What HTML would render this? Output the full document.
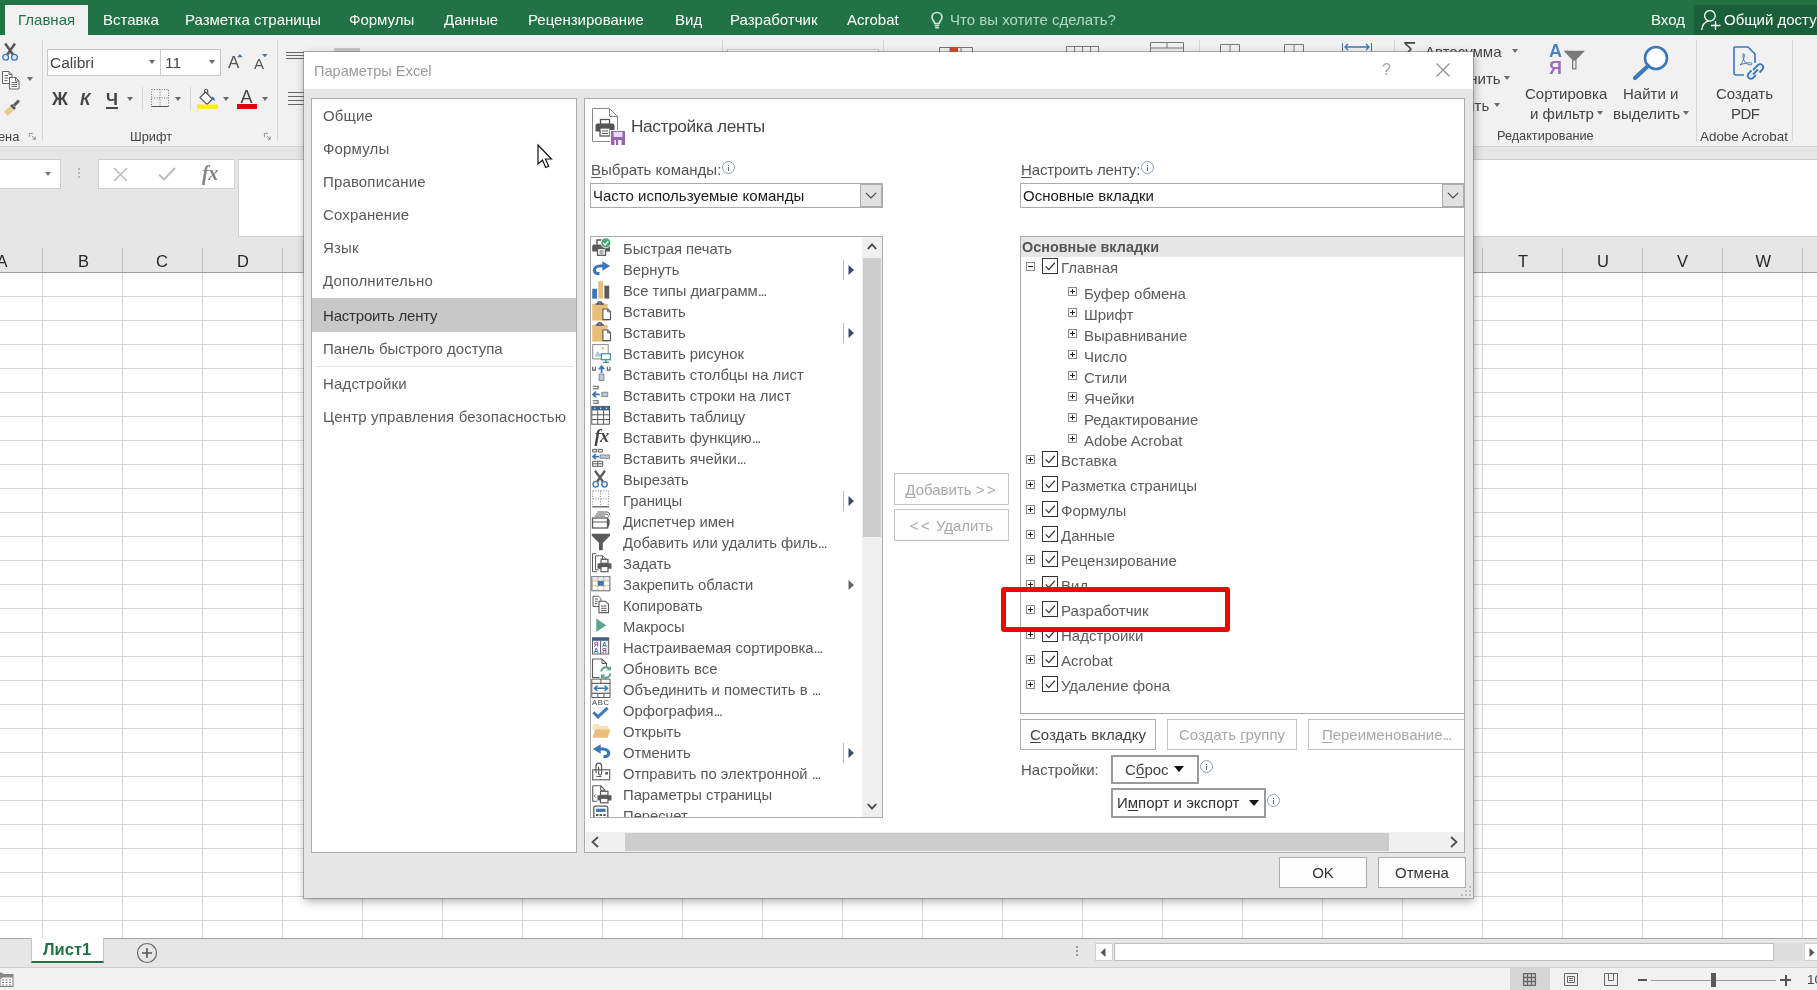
<!DOCTYPE html>
<html lang="ru"><head><meta charset="utf-8"><title>Параметры Excel</title>
<style>
*{box-sizing:border-box;margin:0;padding:0}
html,body{width:1817px;height:990px;overflow:hidden;background:#fff}
body{font-family:"Liberation Sans",sans-serif;font-size:15px;color:#444}
#root{position:relative;width:1817px;height:990px;overflow:hidden;background:#fff;will-change:transform;opacity:.9999}
.a{position:absolute;white-space:nowrap}
.t{position:absolute;white-space:nowrap;line-height:1}
svg{position:absolute;overflow:visible}
/* top bar */
#top{left:0;top:0;width:1817px;height:35px;background:#217346}
#top .t{color:#fff;font-size:15px;top:12px}
#tabhome{left:5px;top:5px;width:83px;height:31px;background:#f1f1f1}
/* ribbon */
#ribbon{left:0;top:35px;width:1817px;height:112px;background:#f1f1f1;border-bottom:1px solid #d2d2d2;box-shadow:inset 0 1px 0 #e9f6ee}
.vsep{position:absolute;width:1px;background:#d5d5d5}
.rb{color:#444}
.dd{position:absolute;width:0;height:0;border-left:3.5px solid transparent;border-right:3.5px solid transparent;border-top:4px solid #6a6a6a}
/* formula zone */
#fz{left:0;top:147px;width:1817px;height:101px;background:#e6e6e6}
.wb{position:absolute;background:#fff;border:1px solid #d0d0d0}
/* grid */
#hdr{left:0;top:248px;width:1817px;height:25px;background:#e6e6e6;border-bottom:1px solid #9f9f9f}
#hdr .t{font-size:16.5px;color:#262626;top:5px}
#hdr i{position:absolute;top:0;width:1px;height:24px;background:#bdbdbd}
#grid{left:0;top:273px;width:1817px;height:666px;background-color:#fff;
background-image:repeating-linear-gradient(to right,transparent 0,transparent 42px,#d6d6d6 42px,#d6d6d6 43px,transparent 43px,transparent 80px),
repeating-linear-gradient(to bottom,transparent 0,transparent 23px,#d6d6d6 23px,#d6d6d6 24px)}
/* bottom */
#tabs{left:0;top:938px;width:1817px;height:30px;background:#e6e6e6;border-top:1px solid #a6a6a6;border-bottom:1px solid #cfcfcf}
#status{left:0;top:968px;width:1817px;height:22px;background:#f1f1f1}
/* dialog */
#dlg{left:304px;top:52px;width:1169px;height:846px;background:#e6e6e6;box-shadow:0 0 0 1px rgba(110,110,110,.5),1px 3px 9px 0 rgba(0,0,0,.34)}
#dtitle{left:0;top:0;width:1169px;height:37px;background:#fff}
#nav{left:7px;top:46px;width:266px;height:755px;background:#fff;border:1px solid #ababab}
#nav .t{left:11px;font-size:15px;color:#5a5a5a;letter-spacing:.15px}
#pane{left:280px;top:46px;width:881px;height:755px;background:#fff;border:1px solid #ababab;overflow:hidden}
.lb{position:absolute;background:#fff;border:1px solid #ababab;overflow:hidden}
.li{position:absolute;left:32px;font-size:14.8px;color:#585858;white-space:nowrap;line-height:1}
.btn{position:absolute;background:#fdfdfd;border:1px solid #adadad;font-size:15px;color:#444;text-align:center;white-space:nowrap}
.btn.dis{color:#a9a9a9;border-color:#c4c4c4}
.btn u,.t u{text-decoration:underline;text-underline-offset:2px;text-decoration-skip-ink:none;text-decoration-thickness:1px}
.sp{letter-spacing:2.2px}
.ex{position:absolute;width:9px;height:9px;border:1px solid #8a8a8a;background:#fff}
.ex:before{content:"";position:absolute;left:1px;top:3px;width:5px;height:1px;background:#222}
.ex.p:after{content:"";position:absolute;left:3px;top:1px;width:1px;height:5px;background:#222}
.cb{position:absolute;width:16px;height:16px;border:1px solid #333;background:#fff}
.tr{position:absolute;font-size:15px;color:#5c5c5c;white-space:nowrap;line-height:1}
.info{position:absolute;width:13px;height:13px;border:1px solid #8aa0b8;border-radius:50%;background:#fff}
.info:before{content:"";position:absolute;left:5px;top:5px;width:1px;height:4px;background:#5a6f87}
.info:after{content:"";position:absolute;left:5px;top:2.5px;width:1px;height:1.3px;background:#5a6f87}
.el{letter-spacing:-1.3px}
</style></head><body><div id="root">
<!-- ===== top green bar ===== -->
<div id="top" class="a">
 <div id="tabhome" class="a"></div>
 <span class="t" style="left:18px;color:#217346">Главная</span>
 <span class="t" style="left:103px">Вставка</span>
 <span class="t" style="left:185px">Разметка страницы</span>
 <span class="t" style="left:349px">Формулы</span>
 <span class="t" style="left:444px">Данные</span>
 <span class="t" style="left:528px">Рецензирование</span>
 <span class="t" style="left:675px">Вид</span>
 <span class="t" style="left:730px">Разработчик</span>
 <span class="t" style="left:847px">Acrobat</span>
 <svg style="left:929px;top:10.500px" width="16" height="20" viewBox="0 0 16 20"><path d="M8 1.5c-3 0-5 2.2-5 4.8 0 1.800 1 2.900 1.800 3.900.5.700.9 1.400.9 2.300h4.600c0-.9.400-1.600.9-2.300.8-1 1.800-2.100 1.800-3.900 0-2.600-2-4.800-5-4.800zM5.800 14.500h4.400M6.200 16.600h3.600" fill="none" stroke="#cfe3d7" stroke-width="1.700"/></svg>
 <span class="t" style="left:950px;color:#b9d6c4">Что вы хотите сделать?</span>
 <span class="t" style="left:1651px">Вход</span>
 <div class="a" style="left:1694px;top:5px;width:123px;height:30px;background:#19603a"></div>
 <svg style="left:1701px;top:9px" width="22" height="22" viewBox="0 0 22 22"><circle cx="8.900" cy="6.800" r="5.300" fill="none" stroke="#fff" stroke-width="1.300"/><path d="M.7 21c.5-5 3-8 7-9.100M10 16.500h9.500M14.500 12v9" fill="none" stroke="#fff" stroke-width="1.300"/></svg>
 <span class="t" style="left:1724px">Общий доступ</span>
</div>

<!-- ===== ribbon ===== -->
<div id="ribbon" class="a">
 <!-- clipboard remnants -->
 <svg style="left:2px;top:8px" width="17" height="18" viewBox="0 0 17 18"><path d="M3.200 .5l8 11.500M13 .5L5 12" stroke="#555" stroke-width="2.400" fill="none"/><circle cx="3.700" cy="14.300" r="2.900" fill="#dbe8f6" stroke="#3b78b8" stroke-width="1.300"/><circle cx="12.500" cy="14.300" r="2.900" fill="#dbe8f6" stroke="#3b78b8" stroke-width="1.300"/></svg>
 <svg style="left:2px;top:36px" width="18" height="19" viewBox="0 0 18 19"><path d="M.5.500h6.500l3 3v9H.5z" fill="#fff" stroke="#666"/><path d="M7 .5v3h3" fill="none" stroke="#666"/><path d="M2.500 4.500h3.500M2.500 7h4M2.500 9.500h3" stroke="#666"/><path d="M7.500 6.500h6l3.500 3.500v8H7.500z" fill="#fff" stroke="#666"/><path d="M13.500 6.500v3.500h3.500" fill="none" stroke="#666"/><path d="M9.500 11.500h5.500M9.500 13.500h5.500M9.500 15.500h5.500" stroke="#666"/></svg>
 <div class="dd" style="left:27px;top:42px"></div>
 <svg style="left:3px;top:64px" width="18" height="18" viewBox="0 0 18 18"><path d="M16 1.500l-5 5" stroke="#5c5c5c" stroke-width="3"/><path d="M9 5l4 4-2 2-4-4z" fill="#5c5c5c"/><path d="M6.500 7.500L1 12.500l3.500 4.500 6-5.500z" fill="#e9c98a"/></svg>
 <span class="t rb" style="left:-2px;top:96px;font-size:12.8px">ена</span>
 <svg style="left:29px;top:98px" width="7" height="7" viewBox="0 0 9 9"><path d="M.5 5V.5H5M3.500 3.500L8 8M8 4.500V8H4.500" fill="none" stroke="#777" stroke-width="1"/></svg>
 <div class="vsep" style="left:42px;top:5px;height:101px"></div>
 <!-- font group -->
 <div class="wb" style="left:47px;top:14px;width:114px;height:27px;border-color:#c8c8c8"></div>
 <div class="wb" style="left:160px;top:14px;width:61px;height:27px;border-color:#c8c8c8"></div>
 <span class="t" style="left:50px;top:20px;font-size:15.5px;color:#444">Calibri</span>
 <span class="t" style="left:165px;top:20px;font-size:15.5px;color:#444">11</span>
 <div class="dd" style="left:149px;top:25px"></div>
 <div class="dd" style="left:209px;top:25px"></div>
 <span class="t" style="left:228px;top:19px;font-size:17px;color:#555">A</span>
 <span class="t" style="left:254px;top:20.500px;font-size:15px;color:#555">A</span>
 <svg style="left:236.500px;top:18.500px" width="6.500" height="4" viewBox="0 0 8 5"><path d="M0 4l3.500-4L7 4z" fill="#3b78b8"/></svg>
 <svg style="left:261.500px;top:19px" width="6.500" height="4" viewBox="0 0 8 5"><path d="M0 0l3.500 4L7 0z" fill="#3b78b8"/></svg>
 <span class="t" style="left:52px;top:56px;font-size:17.500px;font-weight:700;color:#444">Ж</span>
 <span class="t" style="left:80px;top:56px;font-size:17px;font-weight:700;font-style:italic;color:#444">К</span>
 <span class="t" style="left:106px;top:56px;font-size:17px;font-weight:700;color:#444;text-decoration:underline;text-underline-offset:2px;text-decoration-thickness:1.500px">Ч</span>
 <div class="dd" style="left:127px;top:62px"></div>
 <div class="vsep" style="left:142px;top:52px;height:24px"></div>
 <svg style="left:151px;top:54px" width="18" height="18" viewBox="0 0 18 18"><path d="M.5.5h17v17H.5zM9 .5v17M.5 9h17" fill="none" stroke="#777" stroke-width="1" stroke-dasharray="1 1.500"/><path d="M.5 17.500h17" stroke="#555" stroke-width="1"/></svg>
 <div class="dd" style="left:175px;top:62px"></div>
 <div class="vsep" style="left:190px;top:52px;height:24px"></div>
 <svg style="left:197px;top:53px" width="22" height="22" viewBox="0 0 22 22"><path d="M8.500 4l7 7-5.500 5.500-7-7z" fill="#fff" stroke="#555" stroke-width="1.200"/><path d="M7.500 5.500V2.800a1.600 1.600 0 013.200 0V6" fill="none" stroke="#555" stroke-width="1.100"/><path d="M15 8.500c2.200.6 3 2.300 3 4.500-1.500-1.200-2.500-1.300-3.800-1.300z" fill="#3b78b8"/><rect x="0" y="16.500" width="21" height="4.500" fill="#ffee00"/></svg>
 <div class="dd" style="left:223px;top:62px"></div>
 <span class="t" style="left:240.500px;top:53px;font-size:18px;color:#444">A</span>
 <div class="a" style="left:237px;top:69px;width:20px;height:5px;background:#e3000f"></div>
 <div class="dd" style="left:262px;top:62px"></div>
 <span class="t rb" style="left:130px;top:96px;font-size:12.8px">Шрифт</span>
 <svg style="left:264px;top:98px" width="7" height="7" viewBox="0 0 9 9"><path d="M.5 5V.5H5M3.500 3.500L8 8M8 4.500V8H4.500" fill="none" stroke="#777" stroke-width="1"/></svg>
 <div class="vsep" style="left:277px;top:5px;height:101px"></div>
 <!-- alignment remnants -->
 <svg style="left:286px;top:17px" width="18" height="8" viewBox="0 0 18 8"><path d="M0 .5h18M0 3.500h18M0 6.500h18" stroke="#666" stroke-width="1"/></svg>
 <svg style="left:288px;top:57px" width="16" height="14" viewBox="0 0 16 14"><path d="M0 .5h16M0 4.500h16M0 8.500h16M0 12.500h16" stroke="#666" stroke-width="1"/></svg>
 <!-- slivers above dialog -->
 <div class="a" style="left:334px;top:13px;width:26px;height:4px;background:#c9c9c9"></div>
 <div class="vsep" style="left:722px;top:5px;height:12px"></div>
 <div class="a" style="left:727px;top:14px;width:152px;height:4px;border:1px solid #c9c9c9;border-bottom:0;background:#fff"></div>
 <div class="vsep" style="left:883px;top:5px;height:12px"></div>
 <svg style="left:939px;top:12px" width="34" height="5" viewBox="0 0 34 5"><path d="M.5 5V.5h33V5M11 .5V5M22 .5V5" fill="none" stroke="#777"/><rect x="11" y="0" width="8" height="5" fill="#d24726"/></svg>
 <svg style="left:1066px;top:11px" width="33" height="6" viewBox="0 0 33 6"><path d="M.5 6V.5h32V6M8.500 .5V6M16.500 .5V6M24.500 .5V6" fill="none" stroke="#777"/></svg>
 <svg style="left:1150px;top:7px" width="34" height="10" viewBox="0 0 34 10"><path d="M.5 10V.5h33V10M.5 6h33M17 .5V6" fill="none" stroke="#777"/></svg>
 <svg style="left:1220px;top:9px" width="20" height="8" viewBox="0 0 20 8"><path d="M.5 8V.5h19V8M10 .5V8" fill="none" stroke="#777"/></svg>
 <svg style="left:1284px;top:9px" width="20" height="8" viewBox="0 0 20 8"><path d="M.5 8V.5h19V8M10 .5V8" fill="none" stroke="#777"/></svg>
 <svg style="left:1342px;top:7px" width="30" height="10" viewBox="0 0 30 10"><path d="M.5 1v8M29.500 1v8" stroke="#3b78b8"/><path d="M3 5h24M6 2L3 5l3 3M24 2l3 3-3 3" fill="none" stroke="#3b78b8" stroke-width="1.400"/></svg>
 <div class="vsep" style="left:1199px;top:5px;height:12px"></div>
 <div class="vsep" style="left:1394px;top:5px;height:12px"></div>
 <!-- editing group -->
 <span class="t" style="left:1403px;top:4px;font-size:22px;color:#444">Σ</span>
 <span class="t" style="left:1425px;top:9px;font-size:15px;color:#444">Автосумма</span>
 <div class="dd" style="left:1512px;top:14px"></div>
 <span class="t" style="left:1427px;top:36px;font-size:15px;color:#444">Заполнить</span>
 <div class="dd" style="left:1504px;top:41px"></div>
 <span class="t" style="left:1424px;top:63px;font-size:15px;color:#444">Очистить</span>
 <div class="dd" style="left:1494px;top:68px"></div>
 <!-- sort & filter -->
 <span class="t" style="left:1549px;top:7px;font-size:18px;font-weight:700;color:#4a84c2">А</span>
 <span class="t" style="left:1549px;top:24px;font-size:18px;font-weight:700;color:#a36bbd">Я</span>
 <svg style="left:1563px;top:15px" width="23" height="20" viewBox="0 0 23 20"><path d="M.5.800h21.500l-8.500 8.700V19.500h-4.500V9.500z" fill="#7a7a7a"/><path d="M10.300 10.500h2v7.800h-2z" fill="#f1f1f1"/></svg>
 <span class="t" style="left:1525px;top:51px;font-size:15px;color:#444">Сортировка</span>
 <span class="t" style="left:1530px;top:71px;font-size:15px;color:#444">и фильтр</span>
 <div class="dd" style="left:1597px;top:76px"></div>
 <!-- find -->
 <svg style="left:1632px;top:9.500px" width="38" height="36" viewBox="0 0 38 36"><circle cx="24" cy="13" r="11" fill="#fdfdfd" stroke="#3b78b8" stroke-width="2.600"/><path d="M16 21L3 33" stroke="#3b78b8" stroke-width="4.200" stroke-linecap="round"/></svg>
 <span class="t" style="left:1623px;top:51px;font-size:15px;color:#444">Найти и</span>
 <span class="t" style="left:1613px;top:71px;font-size:15px;color:#444">выделить</span>
 <div class="dd" style="left:1683px;top:76px"></div>
 <span class="t rb" style="left:1497px;top:95px;font-size:12.7px">Редактирование</span>
 <div class="vsep" style="left:1696px;top:5px;height:101px"></div>
 <!-- acrobat -->
 <svg style="left:1731px;top:11px" width="36" height="38" viewBox="0 0 36 38"><path d="M3 1h14l7 7v9M3 1v26a2 2 0 002 2h8" fill="none" stroke="#3b78b8" stroke-width="1.600"/><path d="M9 19c3-3 5-9 4-11s-2 4 1 8 8 3 7 1.500-8-.5-12 1.500z" fill="none" stroke="#3b78b8" stroke-width="1"/><path d="M22 24l5-5a3.200 3.200 0 014.500 4.500l-3 3M25 29l-3 3a3.200 3.200 0 01-4.500-4.500l3-3M22 28.500l5-5" fill="none" stroke="#3b78b8" stroke-width="1.800"/></svg>
 <span class="t" style="left:1716px;top:51px;font-size:15px;color:#444">Создать</span>
 <span class="t" style="left:1731px;top:71px;font-size:15px;color:#444;letter-spacing:-.6px">PDF</span>
 <span class="t rb" style="left:1700px;top:95px;font-size:13.4px">Adobe Acrobat</span>
 <div class="vsep" style="left:1792px;top:5px;height:101px"></div>
</div>

<!-- ===== formula zone ===== -->
<div id="fz" class="a">
 <div class="wb" style="left:-2px;top:12px;width:63px;height:30px"></div>
 <div class="dd" style="left:45px;top:25px;border-top-color:#777"></div>
 <div class="a" style="left:78px;top:21px;width:2px;height:2px;background:#b5b5b5;box-shadow:0 4px 0 #b5b5b5,0 8px 0 #b5b5b5"></div>
 <div class="wb" style="left:98px;top:12px;width:137px;height:30px"></div>
 <svg style="left:113px;top:20px" width="15" height="15" viewBox="0 0 15 15"><path d="M1 1l13 13M14 1L1 14" stroke="#bcbcbc" stroke-width="1.600" fill="none"/></svg>
 <svg style="left:158px;top:20px" width="18" height="14" viewBox="0 0 18 14"><path d="M1 7.500l5 5L17 1" stroke="#bcbcbc" stroke-width="2" fill="none"/></svg>
 <span class="t" style="left:202px;top:16px;font-family:'Liberation Serif',serif;font-style:italic;font-weight:700;font-size:20px;color:#858585;letter-spacing:-.5px">fx</span>
 <div class="wb" style="left:238px;top:12px;width:1600px;height:78px"></div>
</div>

<!-- ===== column headers + grid ===== -->
<div id="grid" class="a"></div>
<div id="hdr" class="a">
 <i style="left:42px"></i><i style="left:122px"></i><i style="left:202px"></i><i style="left:282px"></i>
 <i style="left:1482px"></i><i style="left:1562px"></i><i style="left:1642px"></i><i style="left:1722px"></i><i style="left:1802px"></i>
 <span class="t" style="left:-3.500px">A</span>
 <span class="t" style="left:78px">B</span>
 <span class="t" style="left:156px">C</span>
 <span class="t" style="left:237px">D</span>
 <span class="t" style="left:1518px">T</span>
 <span class="t" style="left:1597px">U</span>
 <span class="t" style="left:1677px">V</span>
 <span class="t" style="left:1755.500px">W</span>
</div>

<!-- ===== sheet tabs + status ===== -->
<div id="tabs" class="a">
 <div class="a" style="left:31px;top:-1px;width:73px;height:25px;background:#fff;border-bottom:2px solid #217346;border-left:1px solid #c6c6c6;border-right:1px solid #c6c6c6"></div>
 <span class="t" style="left:43px;top:2px;font-size:16.500px;font-weight:700;color:#217346">Лист1</span>
 <svg style="left:136px;top:3px" width="22" height="22" viewBox="0 0 22 22"><circle cx="11" cy="11" r="9.500" fill="none" stroke="#6a6a6a" stroke-width="1.200"/><path d="M6 11h10M11 6v10" stroke="#555" stroke-width="1.600"/></svg>
 <div class="a" style="left:1076px;top:7px;width:2px;height:2px;background:#9a9a9a;box-shadow:0 4px 0 #9a9a9a,0 8px 0 #9a9a9a"></div>
 <div class="a" style="left:1095px;top:4px;width:18px;height:18px;background:#fff;border:1px solid #cfcfcf"></div>
 <svg style="left:1100px;top:9px" width="6" height="9" viewBox="0 0 6 9"><path d="M5.500 0v9L.5 4.500z" fill="#555"/></svg>
 <div class="a" style="left:1114px;top:4px;width:689px;height:18px;background:#dcdcdc"></div>
 <div class="a" style="left:1114px;top:4px;width:660px;height:18px;background:#fff;border:1px solid #bdbdbd"></div>
 <div class="a" style="left:1804px;top:4px;width:18px;height:18px;background:#fff;border:1px solid #cfcfcf"></div>
 <svg style="left:1809px;top:9px" width="6" height="9" viewBox="0 0 6 9"><path d="M.5 0v9l5-4.500z" fill="#555"/></svg>
</div>
<div id="status" class="a">
 <svg style="left:-3px;top:4px" width="17" height="15" viewBox="0 0 17 15"><rect x="3" y="2.500" width="13" height="12" fill="#fff" stroke="#777"/><rect x="3" y="2.500" width="13" height="3" fill="#8a8a8a"/><path d="M5 8h9M5 10.500h9M5 13h9" stroke="#777" stroke-dasharray="2 1.500"/><circle cx="3.500" cy="3.500" r="3" fill="#8a8a8a"/></svg>
 <div class="a" style="left:1510px;top:0;width:40px;height:22px;background:#d5d5d5"></div>
 <svg style="left:1523px;top:5px" width="13" height="13" viewBox="0 0 13 13"><path d="M.6.600h11.800v11.800H.6zM.6 4.500h11.800M.6 8.500h11.800M4.500 .6v11.800M8.500 .6v11.800" fill="none" stroke="#666" stroke-width="1.300"/></svg>
 <svg style="left:1564px;top:5px" width="14" height="13" viewBox="0 0 14 13"><path d="M.5.500h13v12H.5z" fill="none" stroke="#666"/><path d="M3.500 3.500h7v6h-7zM5 5.500h4M5 7.500h4" fill="none" stroke="#666"/></svg>
 <svg style="left:1604px;top:5px" width="14" height="13" viewBox="0 0 14 13"><path d="M.5.500h13v12H.5zM4.500 .5v7h5V.5" fill="none" stroke="#666"/></svg>
 <div class="a" style="left:1638px;top:11px;width:9px;height:2px;background:#555"></div>
 <div class="a" style="left:1651px;top:11.500px;width:125px;height:1px;background:#9c9c9c"></div>
 <div class="a" style="left:1711px;top:5px;width:5px;height:14px;background:#5a5a5a"></div>
 <div class="a" style="left:1780px;top:11px;width:11px;height:2px;background:#555"></div>
 <div class="a" style="left:1784.500px;top:6.500px;width:2px;height:11px;background:#555"></div>
 <span class="t" style="left:1807px;top:5px;font-size:13.5px;color:#444">100</span>
</div>
<!-- ===== dialog ===== -->
<div id="dlg" class="a">
 <div id="dtitle" class="a"></div>
 <span class="t" style="left:10px;top:12px;font-size:14.600px;color:#9b9b9b">Параметры Excel</span>
 <span class="t" style="left:1078px;top:10px;font-size:16px;color:#a8a8a8">?</span>
 <svg style="left:1132px;top:11px" width="14" height="14" viewBox="0 0 14 14"><path d="M.5.500l13 13M13.500 .5l-13 13" stroke="#8c8c8c" stroke-width="1.100" fill="none"/></svg>

 <!-- nav -->
 <div id="nav" class="a"><div class="a" style="left:-312px;top:-99px;width:1817px;height:990px">
  <div class="a" style="left:312px;top:298px;width:264px;height:34px;background:#c8c8c8"></div>
  <div class="a" style="left:316px;top:366px;width:258px;height:1px;background:#e1e1e1"></div>
  <span class="t" style="left:323px;top:108px">Общие</span>
  <span class="t" style="left:323px;top:141px">Формулы</span>
  <span class="t" style="left:323px;top:174px">Правописание</span>
  <span class="t" style="left:323px;top:207px">Сохранение</span>
  <span class="t" style="left:323px;top:240px">Язык</span>
  <span class="t" style="left:323px;top:273px">Дополнительно</span>
  <span class="t" style="left:323px;top:308px;color:#333;letter-spacing:-.2px">Настроить ленту</span>
  <span class="t" style="left:323px;top:341px;letter-spacing:0">Панель быстрого доступа</span>
  <span class="t" style="left:323px;top:376px">Надстройки</span>
  <span class="t" style="left:323px;top:409px">Центр управления безопасностью</span>
 </div></div>

 <!-- pane -->
 <div id="pane" class="a"><div class="a" style="left:-585px;top:-99px;width:1817px;height:990px">
  <!-- header icon -->
  <svg style="left:592px;top:108px" width="34" height="38" viewBox="0 0 34 38"><path d="M.5.500h17l8 8v25H.5z" fill="#fff" stroke="#8a8a8a"/><path d="M17.500 .5v8h8" fill="none" stroke="#8a8a8a"/><rect x="8.500" y="11.500" width="9" height="5" fill="#fff" stroke="#555" stroke-width="1.300"/><path d="M5.500 15.500h15a2 2 0 012 2v6h-19v-6a2 2 0 012-2z" fill="#555"/><rect x="8" y="20" width="10" height="8" fill="#fff" stroke="#555" stroke-width="1.300"/><path d="M10 23h6M10 25.500h6" stroke="#555"/><rect x="18" y="22" width="15.500" height="15.500" fill="#fff"/><rect x="19" y="23" width="14" height="14" fill="#9564b3"/><rect x="21.500" y="24" width="9" height="5" fill="#eadff2"/><rect x="22.500" y="32" width="7" height="5" fill="#fff"/><rect x="24" y="32" width="2.200" height="5" fill="#9564b3"/></svg>
  <span class="t" style="left:631px;top:118px;font-size:17.300px;color:#444;letter-spacing:-.38px">Настройка ленты</span>

  <span class="t" style="left:591px;top:162px;color:#555"><u>В</u>ыбрать команды:</span>
  <div class="info" style="left:722px;top:161px"></div>
  <div class="a" style="left:590px;top:183px;width:293px;height:25px;background:#fff;border:1px solid #ababab"></div>
  <span class="t" style="left:593px;top:188px;color:#1a1a1a">Часто используемые команды</span>
  <div class="a" style="left:860px;top:184px;width:22px;height:23px;background:#e1e1e1;border:1px solid #adadad"></div>
  <svg style="left:865px;top:192px" width="12" height="7" viewBox="0 0 12 7"><path d="M.8.800L6 6l5.200-5.200" fill="none" stroke="#444" stroke-width="1.200"/></svg>

  <span class="t" style="left:1021px;top:162px;color:#555;letter-spacing:-.15px"><u>Н</u>астроить ленту:</span>
  <div class="info" style="left:1141px;top:161px"></div>
  <div class="a" style="left:1020px;top:183px;width:445px;height:25px;background:#fff;border:1px solid #ababab"></div>
  <span class="t" style="left:1023px;top:188px;color:#1a1a1a">Основные вкладки</span>
  <div class="a" style="left:1442px;top:184px;width:22px;height:23px;background:#e1e1e1;border:1px solid #adadad"></div>
  <svg style="left:1447px;top:192px" width="12" height="7" viewBox="0 0 12 7"><path d="M.8.800L6 6l5.200-5.200" fill="none" stroke="#444" stroke-width="1.200"/></svg>
  <!-- commands listbox -->
  <div class="lb" style="left:590px;top:236px;width:293px;height:582px"><div class="a" style="left:-591px;top:-237px;width:1817px;height:990px">
   <svg style="left:592px;top:236.5px" width="20" height="22" viewBox="0 0 20 22"><path d="M9.500 3H5v4.500" fill="none" stroke="#5a5a5a" stroke-width="1.500"/><path d="M2 7.500h14.500a1.500 1.500 0 011.500 1.500v5.500H.2V9A1.600 1.600 0 012 7.500z" fill="#5a5a5a"/><rect x="5.500" y="11.500" width="8" height="6.800" fill="#fff" stroke="#5a5a5a" stroke-width="1.300"/><path d="M7.500 14h4M7.500 16h4" stroke="#5a5a5a"/><circle cx="13.800" cy="5.900" r="5" fill="#4aa777" stroke="#fff" stroke-width=".8"/><path d="M11.300 6l1.900 1.900 3.100-3.500" fill="none" stroke="#fff" stroke-width="1.400"/></svg>
   <span class="li" style="left:623px;top:241.5px">Быстрая печать</span>
   <svg style="left:592px;top:257.5px" width="20" height="22" viewBox="0 0 20 22"><path d="M11 8H8C4.500 8 2.300 9.800 2.300 12.200c0 2.300 2 3.500 5.200 3.500" fill="none" stroke="#3b78b8" stroke-width="3.200"/><path d="M10.300 3.200l7.900 4.800-7.900 4.800z" fill="#3b78b8"/></svg>
   <span class="li" style="left:623px;top:262.5px">Вернуть</span>
   <div class="a" style="left:843px;top:259.5px;width:1px;height:20px;background:#b9b9b9"></div>
   <svg style="left:848px;top:264.5px" width="6" height="10" viewBox="0 0 6 10"><path d="M.5 0v10L6 5z" fill="#3d4a66"/></svg>
   <svg style="left:592px;top:278.5px" width="20" height="22" viewBox="0 0 20 22"><rect x=".2" y="9.800" width="4.800" height="9.800" fill="#3b78b8"/><rect x="6.300" y="2.200" width="4.900" height="17.400" fill="#e8bf7a"/><rect x="12.400" y="6.700" width="4.800" height="12.900" fill="#5a5a5a"/></svg>
   <span class="li" style="left:623px;top:283.5px">Все типы диаграмм<span class=el>...</span></span>
   <svg style="left:592px;top:299.5px" width="20" height="22" viewBox="0 0 20 22"><rect x=".2" y="3.900" width="15.500" height="16.700" fill="#e8bf7a"/><path d="M3.600 4h8.300M5.800 3.800a2 2 0 014 0" fill="none" stroke="#44546a" stroke-width="1.500"/><path d="M10.900 9h5l2.600 2.600v8H10.900z" fill="#fff" stroke="#5a5a5a" stroke-width="1.100"/><path d="M15.700 9v2.800h2.800" fill="none" stroke="#5a5a5a"/></svg>
   <span class="li" style="left:623px;top:304.5px">Вставить</span>
   <svg style="left:592px;top:320.5px" width="20" height="22" viewBox="0 0 20 22"><rect x=".2" y="3.900" width="15.500" height="16.700" fill="#e8bf7a"/><path d="M3.600 4h8.300M5.800 3.800a2 2 0 014 0" fill="none" stroke="#44546a" stroke-width="1.500"/><path d="M10.900 9h5l2.600 2.600v8H10.900z" fill="#fff" stroke="#5a5a5a" stroke-width="1.100"/><path d="M15.700 9v2.800h2.800" fill="none" stroke="#5a5a5a"/></svg>
   <span class="li" style="left:623px;top:325.5px">Вставить</span>
   <div class="a" style="left:843px;top:322.5px;width:1px;height:20px;background:#b9b9b9"></div>
   <svg style="left:848px;top:327.5px" width="6" height="10" viewBox="0 0 6 10"><path d="M.5 0v10L6 5z" fill="#3d4a66"/></svg>
   <svg style="left:592px;top:341.5px" width="20" height="22" viewBox="0 0 20 22"><rect x=".7" y="2.600" width="15.500" height="14.300" fill="#fff" stroke="#8a8a8a"/><path d="M2.500 14.500l3-5.500 2.500 3.500 1-1 1.500 3z" fill="#a9c4e4"/><circle cx="10.800" cy="6.200" r="1.300" fill="#e8bf7a"/><rect x="9.400" y="11.700" width="9" height="6" fill="#fff" stroke="#3f8f86" stroke-width="1.200"/><path d="M13.900 17.700v2.200M11 20.300h6" stroke="#3f8f86" stroke-width="1.200"/></svg>
   <span class="li" style="left:623px;top:346.5px">Вставить рисунок</span>
   <svg style="left:592px;top:362.5px" width="20" height="22" viewBox="0 0 20 22"><path d="M.7 3.800v3.300h2.600V3.800M15.400 3.800v3.300h2.600V3.800" fill="none" stroke="#5a5a5a" stroke-width="1.100"/><path d="M9.600 3.600v6.300M7 6.200l2.600-2.900 2.600 2.900" fill="none" stroke="#3b78b8" stroke-width="1.800"/><rect x="7.100" y="11.100" width="4.800" height="6.300" fill="#b8c9e0" stroke="#8a8a8a"/></svg>
   <span class="li" style="left:623px;top:367.5px">Вставить столбцы на лист</span>
   <svg style="left:592px;top:383.5px" width="20" height="22" viewBox="0 0 20 22"><path d="M.8 2.300h5.300v2.500H.8M.8 16.700h5.300v2.500H.8" fill="none" stroke="#5a5a5a" stroke-width="1.100"/><path d="M1 10.400h6.800M4 7.600L1 10.400l3 2.800" fill="none" stroke="#3b78b8" stroke-width="1.800"/><rect x="9.800" y="8.300" width="5.900" height="4.300" fill="#b8c9e0" stroke="#8a8a8a"/></svg>
   <span class="li" style="left:623px;top:388.5px">Вставить строки на лист</span>
   <svg style="left:592px;top:404.5px" width="20" height="22" viewBox="0 0 20 22"><rect x="-.2" y="1.400" width="17.700" height="17.800" fill="#fff" stroke="#5a5a5a"/><rect x="-.2" y="1.400" width="17.700" height="4" fill="#3f5f8c"/><path d="M-.2 9.800h17.700M-.2 14.500h17.700M5.700 5.400v13.800M11.600 5.400v13.800" stroke="#5a5a5a"/><path d="M1.800 2.800h2l-1 1.500zM7.700 2.800h2l-1 1.500zM13.500 2.800h2l-1 1.500z" fill="#fff"/></svg>
   <span class="li" style="left:623px;top:409.5px">Вставить таблицу</span>
   <svg style="left:592px;top:425.5px" width="20" height="22" viewBox="0 0 20 22"><text x="2.500" y="15.500" font-family="Liberation Serif,serif" font-style="italic" font-weight="700" font-size="18.500" fill="#444" letter-spacing="-.6">fx</text></svg>
   <span class="li" style="left:623px;top:430.5px">Вставить функцию<span class=el>...</span></span>
   <svg style="left:592px;top:446.5px" width="20" height="22" viewBox="0 0 20 22"><path d="M.7 2.400h4v2.600h-4zM6.300 2.400h4v2.600h-4z" fill="none" stroke="#5a5a5a"/><path d="M.7 14.300h10v5h-10zM5.700 14.300v5M.7 16.800h10" fill="none" stroke="#5a5a5a"/><rect x="8.300" y="8" width="9.300" height="3.300" fill="#b8c9e0" stroke="#8a8a8a"/><path d="M1 9.600h6.300M3.800 7L1 9.600l2.800 2.600" fill="none" stroke="#3b78b8" stroke-width="1.700"/></svg>
   <span class="li" style="left:623px;top:451.5px">Вставить ячейки<span class=el>...</span></span>
   <svg style="left:592px;top:467.5px" width="20" height="22" viewBox="0 0 20 22"><path d="M3 2.800l8 11M13 2.800L5 13.800" stroke="#5a5a5a" stroke-width="2.300" fill="none"/><circle cx="3.700" cy="16.300" r="2.700" fill="#fff" stroke="#3b78b8" stroke-width="1.400"/><circle cx="12.500" cy="16.300" r="2.700" fill="#fff" stroke="#3b78b8" stroke-width="1.400"/></svg>
   <span class="li" style="left:623px;top:472.5px">Вырезать</span>
   <svg style="left:592px;top:488.5px" width="20" height="22" viewBox="0 0 20 22"><path d="M.7 1.800h15.700v16H.7zM8.500 1.800v16M.7 9.800h15.700" fill="none" stroke="#8a8a8a" stroke-dasharray="1.100 1.500"/><path d="M.2 17.800h16.700" stroke="#5a5a5a" stroke-width="1.200"/></svg>
   <span class="li" style="left:623px;top:493.5px">Границы</span>
   <div class="a" style="left:843px;top:490.5px;width:1px;height:20px;background:#b9b9b9"></div>
   <svg style="left:848px;top:495.5px" width="6" height="10" viewBox="0 0 6 10"><path d="M.5 0v10L6 5z" fill="#3d4a66"/></svg>
   <svg style="left:592px;top:509.5px" width="20" height="22" viewBox="0 0 20 22"><path d="M5.500 2h9.500c1.800.3 2.500 1.500 2.600 3M4 4h10c1.600.2 2.300 1 2.500 2.500M2.500 6h10.500" fill="none" stroke="#5a5a5a"/><rect x=".5" y="8" width="15" height="10" fill="#fff" stroke="#5a5a5a" stroke-width="1.300"/><path d="M.5 12h15" stroke="#5a5a5a"/><path d="M15.500 7.500c3 2 3 7.500 0 10.500z" fill="#5a5a5a"/></svg>
   <span class="li" style="left:623px;top:514.5px">Диспетчер имен</span>
   <svg style="left:592px;top:530.5px" width="20" height="22" viewBox="0 0 20 22"><path d="M-.2 2.800h18.200v2L10.800 12v7.200H7V12L-.2 4.800z" fill="#5a5a5a"/></svg>
   <span class="li" style="left:623px;top:535.5px">Добавить или удалить филь<span class=el>...</span></span>
   <svg style="left:592px;top:551.5px" width="20" height="22" viewBox="0 0 20 22"><path d="M4 1.700H.5v18h4.500" fill="none" stroke="#5a5a5a"/><path d="M3.500 3.800h7l3.500 3.500M3.500 3.800v14h3" fill="none" stroke="#5a5a5a"/><path d="M10.500 3.800v3.500h3.500" fill="none" stroke="#5a5a5a"/><rect x="9" y="7.300" width="7" height="4" fill="#fff" stroke="#5a5a5a" stroke-width="1.200"/><path d="M6.500 11.300h12a1 1 0 011 1v4.500h-14v-4.500a1 1 0 011-1z" fill="#5a5a5a"/><rect x="9" y="14.500" width="7" height="5.200" fill="#fff" stroke="#5a5a5a" stroke-width="1.200"/></svg>
   <span class="li" style="left:623px;top:556.5px">Задать</span>
   <svg style="left:592px;top:572.5px" width="20" height="22" viewBox="0 0 20 22"><rect x="-.2" y="3.500" width="18" height="14.200" fill="#fff" stroke="#8a8a8a"/><rect x="-.2" y="3.500" width="18" height="4.500" fill="#dfe8f4"/><path d="M-.2 8h18M-.2 12.800h18M5.800 3.500v14.200M11.800 3.500v14.200" stroke="#d9a25e" stroke-dasharray="2 1"/><rect x="5.800" y="8" width="6" height="4.800" fill="#3b78b8"/><rect x="-.2" y="3.500" width="18" height="14.200" fill="none" stroke="#8a8a8a"/></svg>
   <span class="li" style="left:623px;top:577.5px">Закрепить области</span>
   <svg style="left:848px;top:579.5px" width="6" height="10" viewBox="0 0 6 10"><path d="M.5 0v10L6 5z" fill="#666"/></svg>
   <svg style="left:592px;top:593.5px" width="20" height="22" viewBox="0 0 20 22"><path d="M1 2.200h5.500l2.500 2.500v7.800H1z" fill="#fff" stroke="#5a5a5a"/><path d="M7 7.200h6.500l3 3v8.400H7z" fill="#fff" stroke="#5a5a5a" stroke-width="1.100"/><path d="M9 12h5.500M9 14.300h5.500M9 16.600h5.500M3 5h3M3 7.300h2.500M3 9.600h2.500" stroke="#5a5a5a"/></svg>
   <span class="li" style="left:623px;top:598.5px">Копировать</span>
   <svg style="left:592px;top:614.5px" width="20" height="22" viewBox="0 0 20 22"><path d="M4.300 3.400l9.900 6.800-9.900 6.800z" fill="#5fa58a"/></svg>
   <span class="li" style="left:623px;top:619.5px">Макросы</span>
   <svg style="left:592px;top:635.5px" width="20" height="22" viewBox="0 0 20 22"><rect x=".5" y="1.800" width="16.200" height="16.200" fill="#fff" stroke="#5a5a5a"/><rect x=".5" y="1.800" width="16.200" height="3" fill="#3f5f8c"/><path d="M8.600 4.800v13.200" stroke="#5a5a5a"/><text x="1.700" y="11.300" font-size="6.800" font-weight="700" fill="#9b59b6" font-family="Liberation Sans,sans-serif">Я</text><text x="10" y="11.300" font-size="6.800" font-weight="700" fill="#3b78b8" font-family="Liberation Sans,sans-serif">А</text><text x="1.700" y="17.300" font-size="6.800" font-weight="700" fill="#3b78b8" font-family="Liberation Sans,sans-serif">А</text><text x="10" y="17.300" font-size="6.800" font-weight="700" fill="#9b59b6" font-family="Liberation Sans,sans-serif">Я</text></svg>
   <span class="li" style="left:623px;top:640.5px">Настраиваемая сортировка<span class=el>...</span></span>
   <svg style="left:592px;top:656.5px" width="20" height="22" viewBox="0 0 20 22"><path d="M.5 2h9.500l4.500 4.500V10M.5 2v18.500h7" fill="none" stroke="#5a5a5a" stroke-width="1.100"/><path d="M10 2v4.500h4.500" fill="none" stroke="#5a5a5a"/><path d="M9.300 14.500a4.600 4.600 0 018.300-2.300M18.300 16.500a4.600 4.600 0 01-8.300 2.300" fill="none" stroke="#5fa58a" stroke-width="2"/><path d="M19 8.800v4.500h-4.500zM9 22v-4.500h4.500z" fill="#5fa58a"/></svg>
   <span class="li" style="left:623px;top:661.5px">Обновить все</span>
   <svg style="left:592px;top:677.5px" width="20" height="22" viewBox="0 0 20 22"><path d="M-.2 1.100h18.200v4.300H-.2zM-.2 15.200h18.200v4.300H-.2zM8.900 1.100v4.300M5.800 15.200v4.300M11.900 15.200v4.300" fill="none" stroke="#5a5a5a"/><rect x="-.2" y="5.400" width="18.200" height="9.800" fill="#fff" stroke="#5a5a5a"/><path d="M2.500 10.300h13M5.500 7.600l-3 2.700 3 2.700M12.500 7.600l3 2.700-3 2.700" fill="none" stroke="#3b78b8" stroke-width="1.500"/></svg>
   <span class="li" style="left:623px;top:682.5px">Объединить и поместить в <span class=el>...</span></span>
   <svg style="left:592px;top:698.5px" width="20" height="22" viewBox="0 0 20 22"><text x="0" y="6.300" font-size="7.600" fill="#444" font-family="Liberation Sans,sans-serif" letter-spacing=".7">ABC</text><path d="M1.400 13.300l4.500 4.600 9.700-9" fill="none" stroke="#3b78b8" stroke-width="3"/></svg>
   <span class="li" style="left:623px;top:703.5px">Орфография<span class=el>...</span></span>
   <svg style="left:592px;top:719.5px" width="20" height="22" viewBox="0 0 20 22"><path d="M.5 5.500a1.500 1.500 0 011.500-1.500h4.500l1.500 2h7.500a1 1 0 011 1v3H.5z" fill="#f5e3be"/><path d="M3 9.500h15.500l-3 8.200H.5z" fill="#e8bf7a"/></svg>
   <span class="li" style="left:623px;top:724.5px">Открыть</span>
   <svg style="left:592px;top:740.5px" width="20" height="22" viewBox="0 0 20 22"><path d="M8 8h3c3.500 0 5.700 1.800 5.700 4.200 0 2.300-2 3.500-5.200 3.500" fill="none" stroke="#3b78b8" stroke-width="3.200"/><path d="M8.700 3.200L.8 8l7.900 4.800z" fill="#3b78b8"/></svg>
   <span class="li" style="left:623px;top:745.5px">Отменить</span>
   <div class="a" style="left:843px;top:742.5px;width:1px;height:20px;background:#b9b9b9"></div>
   <svg style="left:848px;top:747.5px" width="6" height="10" viewBox="0 0 6 10"><path d="M.5 0v10L6 5z" fill="#3d4a66"/></svg>
   <svg style="left:592px;top:761.5px" width="20" height="22" viewBox="0 0 20 22"><rect x=".7" y="7.800" width="17" height="10" fill="#fff" stroke="#5a5a5a" stroke-width="1.100"/><rect x="13.300" y="10" width="2.800" height="2.500" fill="#5a5a5a"/><path d="M4 11V4a2.800 2.800 0 015.600 0v7.300a1.500 1.500 0 01-3 0V5M4.500 14.500h5" fill="none" stroke="#5a5a5a" stroke-width="1.200"/></svg>
   <span class="li" style="left:623px;top:766.5px">Отправить по электронной <span class=el>...</span></span>
   <svg style="left:592px;top:782.5px" width="20" height="22" viewBox="0 0 20 22"><path d="M.7 2.800h8l4.500 4.500M.7 2.800v15.500h4.500" fill="none" stroke="#5a5a5a" stroke-width="1.100"/><path d="M8.700 2.800v4.500h4.500" fill="none" stroke="#5a5a5a"/><rect x="8.500" y="8.300" width="7.500" height="4" fill="#fff" stroke="#5a5a5a" stroke-width="1.200"/><path d="M6.500 12.300h12a1 1 0 011 1v4.200h-14v-4.200a1 1 0 011-1z" fill="#5a5a5a"/><rect x="8.500" y="15.300" width="7.500" height="4.500" fill="#fff" stroke="#5a5a5a" stroke-width="1.200"/><path d="M3.800 11.500l-1.500 1.500 1.500 1.500" fill="none" stroke="#5a5a5a"/></svg>
   <span class="li" style="left:623px;top:787.5px">Параметры страницы</span>
   <svg style="left:592px;top:803.5px" width="20" height="22" viewBox="0 0 20 22"><rect x="1.800" y="2.200" width="14" height="19" rx="1.500" fill="#fff" stroke="#5a5a5a" stroke-width="1.300"/><rect x="4" y="4.700" width="9.600" height="3.200" fill="#3b78b8"/><path d="M4 11h2.400M7.600 11H10M11.200 11h2.400M4 14.500h2.400M7.600 14.500H10M11.200 14.500h2.400" stroke="#5a5a5a" stroke-width="2.200"/></svg>
   <span class="li" style="left:623px;top:808.5px">Пересчет</span>
   <div class="a" style="left:862px;top:237px;width:20px;height:580px;background:#f0f0f0"></div>
   <div class="a" style="left:863px;top:258px;width:18px;height:279px;background:#cdcdcd"></div>
   <svg style="left:867px;top:243px" width="10" height="7" viewBox="0 0 12 8"><path d="M1 7l5-5.500L11 7" fill="none" stroke="#444" stroke-width="2.200"/></svg>
   <svg style="left:867px;top:803px" width="10" height="7" viewBox="0 0 12 8"><path d="M1 1l5 5.500L11 1" fill="none" stroke="#444" stroke-width="2.200"/></svg>
  </div></div>
  <!-- middle buttons -->
  <div class="btn dis" style="left:894px;top:473px;width:115px;height:32px;line-height:32px"><u>Д</u>обавить <span class=sp>&gt;&gt;</span></div>
  <div class="btn dis" style="left:894px;top:509px;width:115px;height:32px;line-height:32px"><span class=sp>&lt;&lt;</span> У<u>д</u>алить</div>
  <!-- tabs tree -->
  <div class="lb" style="left:1020px;top:236px;width:460px;height:478px"><div class="a" style="left:-1021px;top:-237px;width:1817px;height:990px">
   <div class="a" style="left:1021px;top:237px;width:460px;height:20px;background:#e6e6e6"></div>
   <span class="tr" style="left:1022px;top:240px;font-weight:700;font-size:14.400px;color:#555">Основные вкладки</span>
   <div class="ex" style="left:1026px;top:262px"></div>
   <div class="cb" style="left:1042px;top:258px"><svg style="left:1.600px;top:3.400px" width="10.500" height="8.600" viewBox="0 0 11 9"><path d="M.7 4.600l3.300 3.400L10.300 .8" fill="none" stroke="#333" stroke-width="1.300"/></svg></div>
   <span class="tr" style="left:1061px;top:260px">Главная</span>
   <div class="ex p" style="left:1068px;top:287px"></div>
   <span class="tr" style="left:1084px;top:286px">Буфер обмена</span>
   <div class="ex p" style="left:1068px;top:308px"></div>
   <span class="tr" style="left:1084px;top:307px">Шрифт</span>
   <div class="ex p" style="left:1068px;top:329px"></div>
   <span class="tr" style="left:1084px;top:328px">Выравнивание</span>
   <div class="ex p" style="left:1068px;top:350px"></div>
   <span class="tr" style="left:1084px;top:349px">Число</span>
   <div class="ex p" style="left:1068px;top:371px"></div>
   <span class="tr" style="left:1084px;top:370px">Стили</span>
   <div class="ex p" style="left:1068px;top:392px"></div>
   <span class="tr" style="left:1084px;top:391px">Ячейки</span>
   <div class="ex p" style="left:1068px;top:413px"></div>
   <span class="tr" style="left:1084px;top:412px">Редактирование</span>
   <div class="ex p" style="left:1068px;top:434px"></div>
   <span class="tr" style="left:1084px;top:433px">Adobe Acrobat</span>
   <div class="ex p" style="left:1026px;top:455px"></div>
   <div class="cb" style="left:1042px;top:451px"><svg style="left:1.600px;top:3.400px" width="10.500" height="8.600" viewBox="0 0 11 9"><path d="M.7 4.600l3.300 3.400L10.300 .8" fill="none" stroke="#333" stroke-width="1.300"/></svg></div>
   <span class="tr" style="left:1061px;top:453px">Вставка</span>
   <div class="ex p" style="left:1026px;top:480px"></div>
   <div class="cb" style="left:1042px;top:476px"><svg style="left:1.600px;top:3.400px" width="10.500" height="8.600" viewBox="0 0 11 9"><path d="M.7 4.600l3.300 3.400L10.300 .8" fill="none" stroke="#333" stroke-width="1.300"/></svg></div>
   <span class="tr" style="left:1061px;top:478px">Разметка страницы</span>
   <div class="ex p" style="left:1026px;top:505px"></div>
   <div class="cb" style="left:1042px;top:501px"><svg style="left:1.600px;top:3.400px" width="10.500" height="8.600" viewBox="0 0 11 9"><path d="M.7 4.600l3.300 3.400L10.300 .8" fill="none" stroke="#333" stroke-width="1.300"/></svg></div>
   <span class="tr" style="left:1061px;top:503px">Формулы</span>
   <div class="ex p" style="left:1026px;top:530px"></div>
   <div class="cb" style="left:1042px;top:526px"><svg style="left:1.600px;top:3.400px" width="10.500" height="8.600" viewBox="0 0 11 9"><path d="M.7 4.600l3.300 3.400L10.300 .8" fill="none" stroke="#333" stroke-width="1.300"/></svg></div>
   <span class="tr" style="left:1061px;top:528px">Данные</span>
   <div class="ex p" style="left:1026px;top:555px"></div>
   <div class="cb" style="left:1042px;top:551px"><svg style="left:1.600px;top:3.400px" width="10.500" height="8.600" viewBox="0 0 11 9"><path d="M.7 4.600l3.300 3.400L10.300 .8" fill="none" stroke="#333" stroke-width="1.300"/></svg></div>
   <span class="tr" style="left:1061px;top:553px">Рецензирование</span>
   <div class="ex p" style="left:1026px;top:580px"></div>
   <div class="cb" style="left:1042px;top:576px"><svg style="left:1.600px;top:3.400px" width="10.500" height="8.600" viewBox="0 0 11 9"><path d="M.7 4.600l3.300 3.400L10.300 .8" fill="none" stroke="#333" stroke-width="1.300"/></svg></div>
   <span class="tr" style="left:1061px;top:578px">Вид</span>
   <div class="ex p" style="left:1026px;top:630px"></div>
   <div class="cb" style="left:1042px;top:626px"><svg style="left:1.600px;top:3.400px" width="10.500" height="8.600" viewBox="0 0 11 9"><path d="M.7 4.600l3.300 3.400L10.300 .8" fill="none" stroke="#333" stroke-width="1.300"/></svg></div>
   <span class="tr" style="left:1061px;top:628px">Надстройки</span>
   <div class="ex p" style="left:1026px;top:655px"></div>
   <div class="cb" style="left:1042px;top:651px"><svg style="left:1.600px;top:3.400px" width="10.500" height="8.600" viewBox="0 0 11 9"><path d="M.7 4.600l3.300 3.400L10.300 .8" fill="none" stroke="#333" stroke-width="1.300"/></svg></div>
   <span class="tr" style="left:1061px;top:653px">Acrobat</span>
   <div class="ex p" style="left:1026px;top:680px"></div>
   <div class="cb" style="left:1042px;top:676px"><svg style="left:1.600px;top:3.400px" width="10.500" height="8.600" viewBox="0 0 11 9"><path d="M.7 4.600l3.300 3.400L10.300 .8" fill="none" stroke="#333" stroke-width="1.300"/></svg></div>
   <span class="tr" style="left:1061px;top:678px">Удаление фона</span>
   <div class="a" style="left:1021px;top:591px;width:205px;height:36px;background:#fff"></div>
   <div class="ex p" style="left:1026px;top:605px"></div>
   <div class="cb" style="left:1042px;top:601px"><svg style="left:1.600px;top:3.400px" width="10.500" height="8.600" viewBox="0 0 11 9"><path d="M.7 4.600l3.300 3.400L10.300 .8" fill="none" stroke="#333" stroke-width="1.300"/></svg></div>
   <span class="tr" style="left:1061px;top:603px">Разработчик</span>
  </div></div>
  <!-- bottom buttons -->
  <div class="btn" style="left:1020px;top:719px;width:136px;height:31px;line-height:29px"><u>С</u>оздать вкладку</div>
  <div class="btn dis" style="left:1167px;top:719px;width:130px;height:31px;line-height:29px">Создать <u>г</u>руппу</div>
  <div class="btn dis" style="left:1308px;top:719px;width:157px;height:31px;line-height:29px"><u>П</u>ереименование<span class=el>...</span></div>
  <span class="t" style="left:1021px;top:762px;color:#555">Настройки:</span>
  <div class="btn" style="left:1111px;top:755px;width:88px;height:29px;line-height:25px;border:2px solid #9a9a9a;text-align:left;padding-left:12px">С<u>б</u>рос</div>
  <svg style="left:1174px;top:766px" width="10" height="6" viewBox="0 0 10 6"><path d="M0 0h10L5 6z" fill="#111"/></svg>
  <div class="info" style="left:1200px;top:760px"></div>
  <div class="btn" style="left:1111px;top:788px;width:155px;height:30px;line-height:26px;border:2px solid #9a9a9a;text-align:left;padding-left:4px;color:#333">И<u>м</u>порт и экспорт</div>
  <svg style="left:1249px;top:800px" width="10" height="6" viewBox="0 0 10 6"><path d="M0 0h10L5 6z" fill="#111"/></svg>
  <div class="info" style="left:1267px;top:794px"></div>
  <!-- horizontal scrollbar -->
  <div class="a" style="left:586px;top:832px;width:880px;height:20px;background:#f0f0f0"></div>
  <div class="a" style="left:625px;top:833px;width:764px;height:18px;background:#cdcdcd"></div>
  <svg style="left:591px;top:836px" width="8" height="12" viewBox="0 0 8 12"><path d="M7 1L1.500 6 7 11" fill="none" stroke="#505050" stroke-width="1.800"/></svg>
  <svg style="left:1450px;top:836px" width="8" height="12" viewBox="0 0 8 12"><path d="M1 1l5.500 5L1 11" fill="none" stroke="#505050" stroke-width="1.800"/></svg>
  <!-- red highlight -->
  <div class="a" style="left:1001px;top:586.500px;width:229px;height:45px;border:5px solid #ec0808;border-radius:3px"></div>
 </div></div>
 <!-- OK / cancel -->
 <div class="btn" style="left:975px;top:805px;width:88px;height:31px;line-height:29px;color:#333">OK</div>
 <div class="btn" style="left:1074px;top:805px;width:88px;height:31px;line-height:29px;color:#333">Отмена</div>
 <svg style="left:1156px;top:833px" width="12" height="12" viewBox="0 0 12 12"><path d="M9 1h2v2H9zM9 5h2v2H9zM5 5h2v2H5zM9 9h2v2H9zM5 9h2v2H5zM1 9h2v2H1z" fill="#bdbdbd"/></svg>
</div>
<!-- mouse cursor -->
<svg style="left:537px;top:144px" width="17" height="25" viewBox="0 0 17 25"><path d="M1 1v19l4.500-4 3.200 7.500 3-1.300-3.200-7.200h6z" fill="#fff" stroke="#111" stroke-width="1.200" stroke-linejoin="miter"/></svg>
</div></body></html>
